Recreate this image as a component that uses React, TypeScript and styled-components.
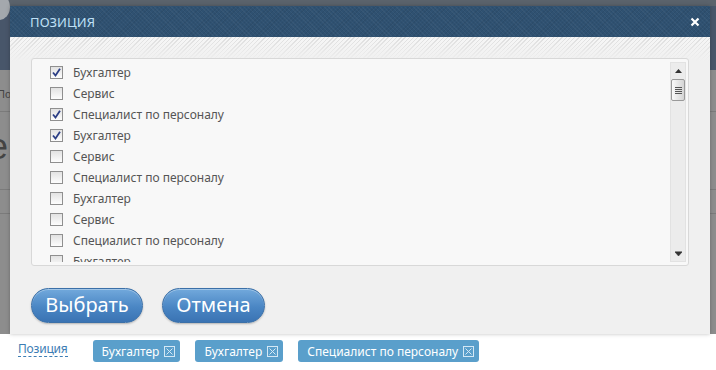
import React from "react";
import styled, { createGlobalStyle } from "styled-components";

const Global = createGlobalStyle`
  html, body { margin: 0; padding: 0; background: #fff; }
  body { font-family: "Noto Sans", "DejaVu Sans", sans-serif; }
  * { box-sizing: border-box; }
`;

const Page = styled.div`
  width: 716px;
  height: 370px;
  display: flex;
  flex-direction: column;
  overflow: hidden;
`;

const Stage = styled.div`
  position: relative;
  height: 334px;
  flex: none;
  background: #8d8d8d;
  display: flex;
  flex-direction: column;
`;

const BgHeader = styled.div`
  height: 70px;
  flex: none;
  background: linear-gradient(#5b636c 0 6px, #48566a 6px);
  position: relative;
`;

const BgCircle = styled.div`
  position: absolute;
  left: -12px;
  top: -6px;
  width: 22px;
  height: 26px;
  border-radius: 50%;
  background: #a4a8ad;
`;

const BgNav = styled.div`
  height: 42px;
  flex: none;
  border-bottom: 1px solid #7b7b7b;
  font: 11px "Liberation Sans", sans-serif;
  color: #444;
  padding: 18px 0 0 0;
  margin-left: -3px;
`;

const BgBig = styled.div`
  font: 36px "Liberation Sans", sans-serif;
  color: #444;
  height: 78px;
  margin-left: -12px;
  padding-top: 14px;
  border-bottom: 1px solid #7b7b7b;
`;

const BgLine = styled.div`
  height: 24px;
  border-bottom: 1px solid #7b7b7b;
`;

const BgItalic = styled.div`
  font: italic 18px "Liberation Sans", sans-serif;
  color: #555;
  margin-left: -10px;
  padding-top: 2px;
`;

const Dialog = styled.div`
  position: absolute;
  left: 10px;
  top: 6px;
  width: 700px;
  height: 328px;
  background: #f0f0f0;
  display: flex;
  flex-direction: column;
  box-shadow: 0 0 4px rgba(0, 0, 0, 0.25);
`;

const Header = styled.div`
  height: 31px;
  flex: none;
  display: flex;
  align-items: center;
  justify-content: space-between;
  padding: 0 9px 0 20px;
  background-color: #2f5171;
  background-image: repeating-linear-gradient(
      45deg,
      rgba(255, 255, 255, 0.04) 0 1px,
      transparent 1px 3px
    ),
    repeating-linear-gradient(-45deg, rgba(0, 0, 0, 0.06) 0 1px, transparent 1px 3px);
`;

const Title = styled.div`
  color: #bfe0f6;
  font: 13px "Noto Sans", sans-serif;
  letter-spacing: 0.1px;
`;

const Close = styled.button`
  border: 0;
  background: none;
  padding: 0;
  width: 12px;
  height: 12px;
  display: flex;
  align-items: center;
  justify-content: center;
  cursor: pointer;
`;

const Body = styled.div`
  flex: 1;
  display: flex;
  flex-direction: column;
  padding: 21px 21px 11px 21px;
  background-image: linear-gradient(rgba(240, 240, 240, 0) 0, #f0f0f0 24px),
    repeating-linear-gradient(-45deg, #f6f6f6 0 2px, #dedede 2px 3px);
  background-repeat: no-repeat;
  background-size: 100% 30px, 100% 30px;
  background-color: #f0f0f0;
`;

const ListBox = styled.div`
  height: 208px;
  flex: none;
  background: #f8f8f8;
  border: 1px solid #d8d8d8;
  border-radius: 3px;
  display: flex;
  padding: 2px 2px 3px 0;
`;

const Rows = styled.div`
  flex: 1;
  overflow: hidden;
  padding-top: 1px;
`;

const Row = styled.label`
  height: 21px;
  display: flex;
  align-items: center;
  padding-left: 18px;
  gap: 10px;
  font: 12px "Noto Sans", sans-serif;
  color: #555;
`;

const Box = styled.span<{ $checked: boolean }>`
  width: 13px;
  height: 13px;
  flex: none;
  border: 1px solid #8f8f8f;
  background: linear-gradient(#e2e2e2, #fdfdfd);
  display: flex;
  align-items: center;
  justify-content: center;
`;

const Scroll = styled.div`
  width: 16px;
  flex: none;
  margin: 1px 0 0 0;
  background: #ececec;
  border: 1px solid #e2e2e2;
  display: flex;
  flex-direction: column;
  align-items: center;
`;

const Arrow = styled.div`
  height: 16px;
  width: 100%;
  display: flex;
  align-items: center;
  justify-content: center;
`;

const Spacer = styled.div`
  flex: 1;
`;

const Thumb = styled.div`
  width: 14px;
  height: 22px;
  border: 1px solid #9a9a9a;
  border-radius: 2px;
  background: linear-gradient(90deg, #fafafa, #d4d4d4);
  display: flex;
  flex-direction: column;
  justify-content: center;
  gap: 1px;
  padding-left: 3px;
`;

const Grip = styled.span`
  width: 7px;
  height: 1px;
  background: #555;
`;

const Actions = styled.div`
  display: flex;
  gap: 19px;
  margin-top: 22px;
`;

const Button = styled.button<{ $w: number }>`
  width: ${(p) => p.$w}px;
  height: 35px;
  border-radius: 18px;
  border: 1px solid #3b70a8;
  background: linear-gradient(#72a9dc, #4a86c4 55%, #3a73b3);
  color: #fff;
  font: 20px "Noto Sans", sans-serif;
  box-shadow: inset 0 1px 0 rgba(255, 255, 255, 0.35), 0 1px 2px rgba(0, 0, 0, 0.25);
  padding: 0 0 2px;
  cursor: pointer;
`;

const Bottom = styled.div`
  flex: 1;
  background: #fff;
  display: flex;
  align-items: center;
  padding: 0 0 2px 18px;
`;

const Label = styled.span`
  font: 12px "Noto Sans", sans-serif;
  letter-spacing: -0.2px;
  color: #3d7db4;
  border-bottom: 1px dashed #3d7db4;
  line-height: 14px;
  margin-right: 25px;
  margin-top: -4px;
`;

const Tags = styled.div`
  display: flex;
  gap: 15px;
`;

const Tag = styled.span`
  height: 22px;
  display: flex;
  align-items: center;
  gap: 5px;
  padding: 0 5px 0 9px;
  background: #5a9fcb;
  border-radius: 3px;
  color: #fff;
  font: 12px "Noto Sans", sans-serif;
`;

const Check = () => (
  <svg width="9" height="9" viewBox="0 0 9 9">
    <path d="M1 4.5 L3.5 7.5 L8 0.8" fill="none" stroke="#2c3f86" strokeWidth="1.8" />
  </svg>
);

const TagX = () => (
  <svg width="11" height="11" viewBox="0 0 11 11">
    <rect x="0.5" y="0.5" width="10" height="10" fill="none" stroke="#d4e8f5" />
    <path d="M2.5 2.5 L8.5 8.5 M8.5 2.5 L2.5 8.5" stroke="#d4e8f5" />
  </svg>
);

const items: [string, boolean][] = [
  ["Бухгалтер", true],
  ["Сервис", false],
  ["Специалист по персоналу", true],
  ["Бухгалтер", true],
  ["Сервис", false],
  ["Специалист по персоналу", false],
  ["Бухгалтер", false],
  ["Сервис", false],
  ["Специалист по персоналу", false],
  ["Бухгалтер", false],
];

export default function App() {
  return (
    <Page>
      <Global />
      <Stage>
        <BgHeader>
          <BgCircle />
        </BgHeader>
        <BgNav>По</BgNav>
        <BgBig>е</BgBig>
        <BgLine />
        <BgItalic>р</BgItalic>
        <Dialog>
          <Header>
            <Title>ПОЗИЦИЯ</Title>
            <Close aria-label="close">
              <svg width="10" height="10" viewBox="0 0 10 10">
                <path d="M1.5 1.5 L8.5 8.5 M8.5 1.5 L1.5 8.5" stroke="#fff" strokeWidth="2.2" />
              </svg>
            </Close>
          </Header>
          <Body>
            <ListBox>
              <Rows>
                {items.map(([t, c], i) => (
                  <Row key={i}>
                    <Box $checked={c}>{c && <Check />}</Box>
                    {t}
                  </Row>
                ))}
              </Rows>
              <Scroll>
                <Arrow>
                  <svg width="7" height="4" viewBox="0 0 7 4">
                    <path d="M0 4 L3.5 0 L7 4Z" fill="#333" />
                  </svg>
                </Arrow>
                <Thumb>
                  <Grip />
                  <Grip />
                  <Grip />
                  <Grip />
                </Thumb>
                <Spacer />
                <Arrow>
                  <svg width="7" height="5" viewBox="0 0 7 5">
                    <path d="M0 0 H7 M0 1 L3.5 5 L7 1Z" fill="#333" stroke="#333" strokeWidth="0.6" />
                  </svg>
                </Arrow>
              </Scroll>
            </ListBox>
            <Actions>
              <Button $w={112}>Выбрать</Button>
              <Button $w={103}>Отмена</Button>
            </Actions>
          </Body>
        </Dialog>
      </Stage>
      <Bottom>
        <Label>Позиция</Label>
        <Tags>
          <Tag>Бухгалтер <TagX /></Tag>
          <Tag>Бухгалтер <TagX /></Tag>
          <Tag>Специалист по персоналу <TagX /></Tag>
        </Tags>
      </Bottom>
    </Page>
  );
}
